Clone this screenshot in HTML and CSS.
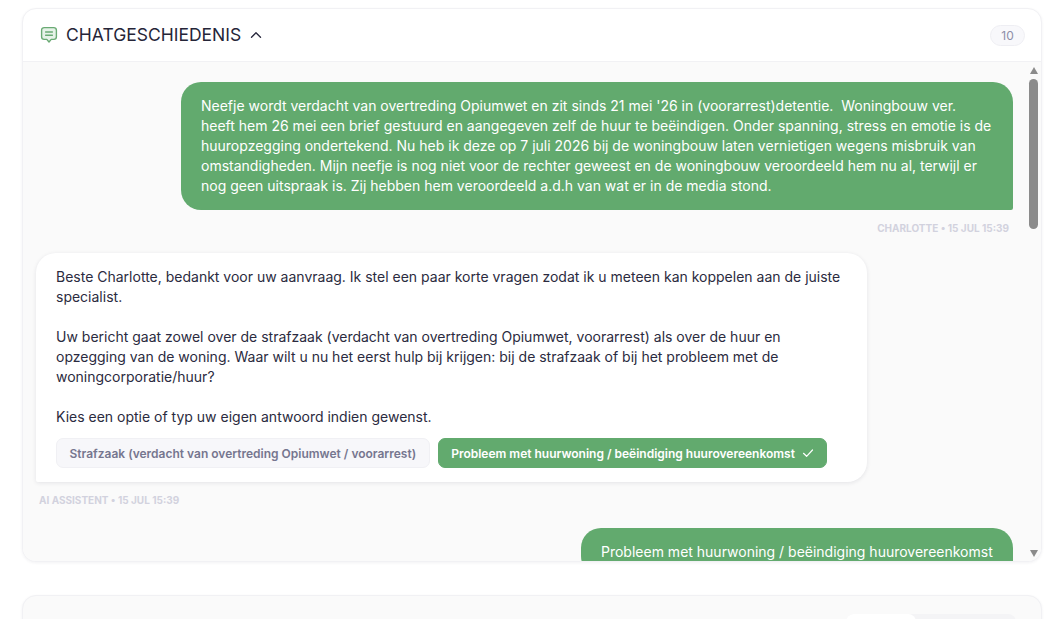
FILE: index.html
```html
<!DOCTYPE html>
<html lang="nl">
<head>
    <meta charset="UTF-8">
    <meta name="viewport" content="width=device-width, initial-scale=1.0">
    <title>Chatgeschiedenis</title>
    <link rel="stylesheet" href="styles.css">
</head>
<body>

    <section class="card chat">
        <header class="chat-header">
            <svg class="chat-icon" width="18" height="18" viewBox="0 0 18 18" fill="none" stroke="#6aaa74" stroke-width="1.4" stroke-linecap="round" stroke-linejoin="round">
                <path d="M4.2 1.6h9.6a2.6 2.6 0 0 1 2.6 2.6v6.6a2.6 2.6 0 0 1-2.6 2.6h-2.6L9 16l-2.2-2.6H4.2a2.6 2.6 0 0 1-2.6-2.6V4.200a2.600 2.600 0 0 1 2.600-2.600z" fill="#e6f2e8"/>
                <path d="M5.600 6h6.800M5.600 9.200h6.800"/>
            </svg>
            <h2>CHATGESCHIEDENIS</h2>
            <svg class="chevron" width="14" height="14" viewBox="0 0 14 14" fill="none" stroke="#2b2b40" stroke-width="1.4" stroke-linecap="round" stroke-linejoin="round">
                <path d="M2.500 9.200 7 4.700l4.500 4.500"/>
            </svg>
            <span class="count">10</span>
        </header>

        <div class="chat-body">
            <div class="messages">
                <div class="bubble user first">Neefje wordt verdacht van overtreding Opiumwet en zit sinds 21 mei '26 in (voorarrest)detentie.&nbsp; Woningbouw ver. heeft hem 26 mei een brief gestuurd en aangegeven zelf de huur te beëindigen. Onder spanning, stress en emotie is de huuropzegging ondertekend. Nu heb ik deze op 7 juli 2026 bij de woningbouw laten vernietigen wegens misbruik van omstandigheden. Mijn neefje is nog niet voor de rechter geweest en de woningbouw veroordeeld hem nu al, terwijl er nog geen uitspraak is. Zij hebben hem veroordeeld a.d.h van wat er in de media stond.</div>
                <div class="meta meta-right">CHARLOTTE • 15 JUL 15:39</div>

                <div class="bubble ai">
                    <p>Beste Charlotte, bedankt voor uw aanvraag. Ik stel een paar korte vragen zodat ik u meteen kan koppelen aan de juiste specialist.</p>
                    <p>Uw bericht gaat zowel over de strafzaak (verdacht van overtreding Opiumwet, voorarrest) als over de huur en opzegging van de woning. Waar wilt u nu het eerst hulp bij krijgen: bij de strafzaak of bij het probleem met de woningcorporatie/huur?</p>
                    <p>Kies een optie of typ uw eigen antwoord indien gewenst.</p>
                    <div class="options">
                        <button class="option">Strafzaak (verdacht van overtreding Opiumwet / voorarrest)</button>
                        <button class="option chosen">Probleem met huurwoning / beëindiging huurovereenkomst
                            <svg width="12" height="12" viewBox="0 0 12 12" fill="none" stroke="#fff" stroke-width="1.2" stroke-linecap="round" stroke-linejoin="round"><path d="M1.500 6.300 4.600 9.300l5.900-6.300"/></svg>
                        </button>
                    </div>
                </div>
                <div class="meta">AI ASSISTENT • 15 JUL 15:39</div>

                <div class="bubble user second">Probleem met huurwoning / beëindiging huurovereenkomst</div>
            </div>

            <div class="scrollbar">
                <span class="arrow up"></span>
                <span class="thumb"></span>
                <span class="arrow down"></span>
            </div>
        </div>
    </section>

    <section class="card next">
        <div class="tabs">
            <span class="tab"></span>
            <span class="tab"></span>
        </div>
    </section>

</body>
</html>
```

FILE: styles.css
```css
* { box-sizing: border-box; }

html, body { height: 100%; overflow: hidden; }

body {
    margin: 0;
    padding: 8px 13px 0 22px;
    background: #fff;
    color: #2b2b40;
    font-family: Inter, "Noto Sans", sans-serif;
    font-size: 14px;
    line-height: 20px;
}

.card {
    border: 1px solid #f1f1f4;
    border-radius: 14px;
    background: #fff;
    overflow: hidden;
    box-shadow: 0 1px 3px rgba(30, 30, 60, 0.06);
}

.chat { height: 554px; display: flex; flex-direction: column; }

.chat-header {
    height: 53px;
    flex: none;
    display: flex;
    align-items: center;
    padding: 0 16px 0 17px;
    border-bottom: 1px solid #f1f1f4;
}

.chat-icon { margin-right: 8px; }

.chat-header h2 {
    margin: 0 8px 0 0;
    font-size: 17.500px;
    font-weight: 400;
    color: #252538;
}

.count {
    margin-left: auto;
    width: 35px;
    height: 21px;
    border: 1px solid #eeeef3;
    border-radius: 11px;
    background: #f8f8fb;
    color: #8e8ea8;
    font-size: 12px;
    line-height: 19px;
    text-align: center;
}

.chat-body {
    flex: 1;
    min-height: 0;
    display: flex;
    background: #fafafa;
}

.messages {
    flex: 1;
    min-width: 0;
    overflow: hidden;
    padding: 20px 14px 0 13px;
    display: flex;
    flex-direction: column;
}

.bubble { flex: none; border-radius: 20px; }

.user {
    align-self: flex-end;
    padding: 14px 20px;
    background: #62aa6e;
    color: #fff;
    border-bottom-right-radius: 2px;
}

.first { width: 832px; }

.second { width: 432px; padding-top: 14px; height: 48px; }

.ai {
    width: 831px;
    margin-top: 18px;
    padding: 14px 20px;
    background: #fff;
    border-bottom-left-radius: 2px;
    box-shadow: 0 1px 4px rgba(30, 30, 60, 0.10);
}

.ai p { margin: 0 0 20px; }
.ai p:nth-of-type(3) { margin-bottom: 0; }

.options { display: flex; gap: 8px; margin-top: 11px; }

.option {
    height: 30px;
    padding: 0 12.500px;
    border: 1px solid #f0f0f4;
    border-radius: 7px;
    background: #f7f7fa;
    color: #76768f;
    font-family: inherit;
    font-size: 12px;
    font-weight: 600;
    white-space: nowrap;
}

.chosen {
    display: flex;
    align-items: center;
    gap: 7px;
    border-color: #62aa6e;
    background: #62aa6e;
    color: #fff;
}

.meta {
    flex: none;
    margin-top: 11px;
    padding: 0 3px;
    color: #d2d2de;
    font-size: 10px;
    font-weight: 700;
    line-height: 14px;
}

.meta-right { align-self: flex-end; padding-right: 4px; }

.meta + .bubble.second { margin-top: 21px; }

.scrollbar {
    flex: none;
    width: 13px;
    margin-right: 1px;
    display: flex;
    flex-direction: column;
    align-items: center;
    padding: 5px 0 4px;
}

.arrow {
    width: 0;
    height: 0;
    border-left: 4.500px solid transparent;
    border-right: 4.500px solid transparent;
}

.arrow.up { border-bottom: 7px solid #8b8b8b; }
.arrow.down { margin-top: auto; border-top: 7px solid #8b8b8b; }

.thumb {
    width: 9px;
    height: 150px;
    margin-top: 5px;
    border-radius: 5px;
    background: #8b8b8b;
}

.next {
    height: 60px;
    margin-top: 33px;
    background: #fafafa;
    padding: 18px 25px 0 0;
    display: flex;
    justify-content: flex-end;
}

.tabs { display: flex; height: 30px; border-radius: 8px; background: #f4f4f6; }
.tab { width: 100px; border-radius: 8px; }
.tab:first-child { background: #fff; width: 70px; }
```
